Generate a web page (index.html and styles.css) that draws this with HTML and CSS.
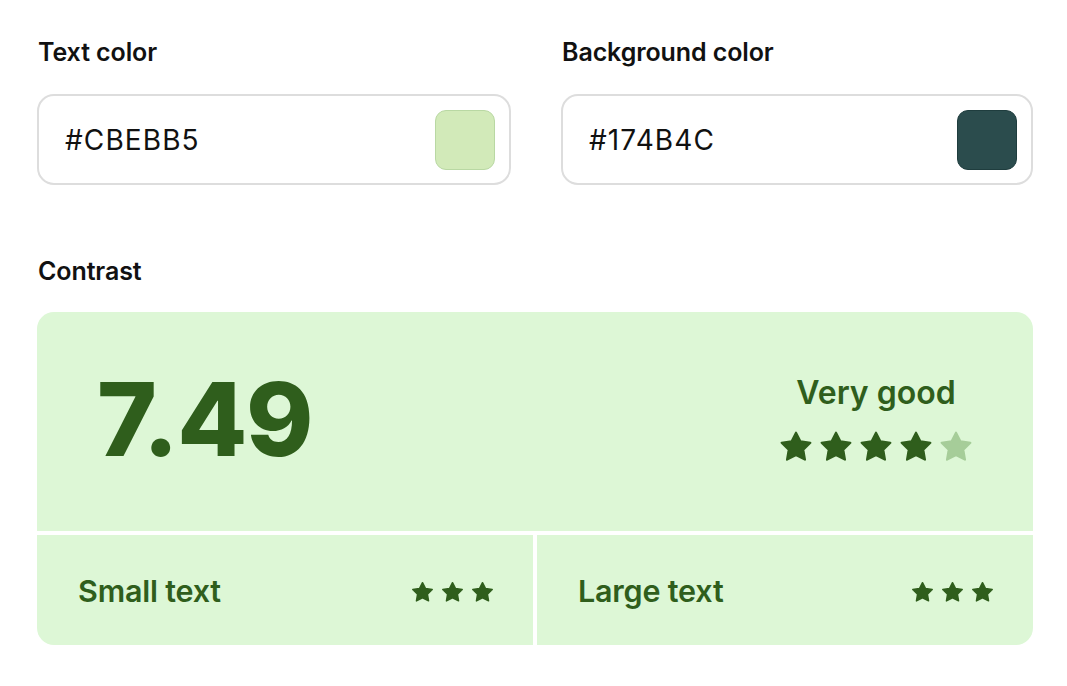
FILE: index.html
```html
<!DOCTYPE html>
<html lang="en">
<head>
<meta charset="utf-8">
<title>Contrast checker</title>
<link rel="stylesheet" href="styles.css">
</head>
<body>
<svg width="0" height="0" class="defs">
  <defs>
    <symbol id="star" viewBox="-1 -1 22 21">
      <polygon points="10,0.6 12.9,6.2 19.3,7.1 14.7,11.6 15.8,18 10,15 4.2,18 5.3,11.6 0.7,7.1 7.1,6.2" stroke-linejoin="round" stroke-width="1.4"/>
    </symbol>
  </defs>
</svg>
<main class="page">
  <section class="fields">
    <div class="field">
      <div class="label">Text color</div>
      <div class="input">
        <span class="hex">#CBEBB5</span>
        <span class="swatch swatch-light"></span>
      </div>
    </div>
    <div class="field">
      <div class="label">Background color</div>
      <div class="input">
        <span class="hex">#174B4C</span>
        <span class="swatch swatch-dark"></span>
      </div>
    </div>
  </section>

  <div class="label contrast-label">Contrast</div>
  <section class="card">
    <div class="cell top">
      <div class="ratio">7.49</div>
      <div class="rating">
        <div class="rating-text">Very good</div>
        <div class="stars big">
          <svg class="on"><use href="#star"/></svg>
          <svg class="on"><use href="#star"/></svg>
          <svg class="on"><use href="#star"/></svg>
          <svg class="on"><use href="#star"/></svg>
          <svg class="off"><use href="#star"/></svg>
        </div>
      </div>
    </div>
    <div class="cell sub">
      <span class="sub-label">Small text</span>
      <div class="stars small">
        <svg class="on"><use href="#star"/></svg>
        <svg class="on"><use href="#star"/></svg>
        <svg class="on"><use href="#star"/></svg>
      </div>
    </div>
    <div class="cell sub">
      <span class="sub-label">Large text</span>
      <div class="stars small">
        <svg class="on"><use href="#star"/></svg>
        <svg class="on"><use href="#star"/></svg>
        <svg class="on"><use href="#star"/></svg>
      </div>
    </div>
  </section>
</main>
</body>
</html>
```

FILE: styles.css
```css
* { box-sizing: border-box; }
html, body { margin: 0; background: #fff; }
body {
  font-family: Inter, "Noto Sans", "Liberation Sans", sans-serif;
  color: #111;
}
.defs { position: absolute; }
.page {
  width: 996px;
  margin-left: 37px;
  padding-top: 38px;
}
.fields {
  display: grid;
  grid-template-columns: 474px 472px;
  column-gap: 50px;
}
.label {
  font-size: 25px;
  font-weight: 600;
  line-height: 28px;
  padding-left: 1px;
  letter-spacing: -0.1px;
}
.input {
  margin-top: 28px;
  height: 91px;
  border: 2px solid #dddddd;
  border-radius: 17px;
  display: flex;
  align-items: center;
  justify-content: space-between;
  padding: 0 14px 0 26px;
}
.hex {
  font-size: 28px;
  font-weight: 400;
  letter-spacing: 1.1px;
}
.swatch {
  width: 60px;
  height: 60px;
  border-radius: 11px;
}
.swatch-light { background: #d2eab9; border: 1px solid #b9d8a3; }
.swatch-dark { background: #2b4c4d; border: 1px solid #1f3d3e; }

.contrast-label { margin-top: 72px; }

.card {
  margin-top: 27px;
  display: grid;
  grid-template-columns: 1fr 1fr;
  gap: 4px;
  border-radius: 17px;
  overflow: hidden;
  color: #2f5e1c;
}
.cell { background: #ddf7d6; }
.top {
  grid-column: 1 / 3;
  height: 219px;
  display: flex;
  align-items: center;
  justify-content: space-between;
  padding: 0 60px 0 60px;
}
.ratio {
  font-size: 102px;
  font-weight: 800;
  letter-spacing: -1.5px;
  line-height: 1;
  margin-top: -6px;
}
.rating {
  display: flex;
  flex-direction: column;
  align-items: center;
  margin-top: 2px;
}
.rating-text {
  font-size: 32px;
  font-weight: 600;
  line-height: 38px;
  margin-top: -8px;
}
.stars { display: flex; }
.stars svg { fill: #2f5e1c; stroke: #2f5e1c; }
.stars svg.off { fill: #a6cd99; stroke: #a6cd99; }
.stars.big { gap: 6px; margin-top: 18px; }
.stars.big svg { width: 34px; height: 33px; }
.stars.small { gap: 7px; margin-top: 4px; }
.stars.small svg { width: 23px; height: 22px; }

.sub {
  height: 110px;
  display: flex;
  align-items: center;
  justify-content: space-between;
  padding: 0 39px 0 41px;
}
.sub-label {
  font-size: 30.5px;
  font-weight: 600;
  letter-spacing: -0.2px;
}
```
